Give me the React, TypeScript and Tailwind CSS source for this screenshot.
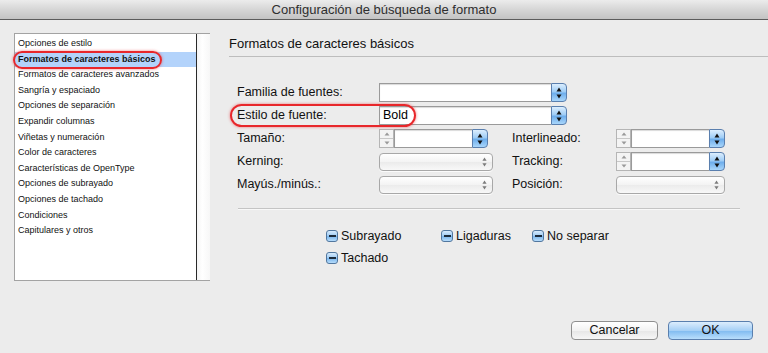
import React from 'react';

const listItems = [
  'Opciones de estilo',
  'Formatos de caracteres básicos',
  'Formatos de caracteres avanzados',
  'Sangría y espaciado',
  'Opciones de separación',
  'Expandir columnas',
  'Viñetas y numeración',
  'Color de caracteres',
  'Características de OpenType',
  'Opciones de subrayado',
  'Opciones de tachado',
  'Condiciones',
  'Capitulares y otros',
];

// tiny up/down arrows used by steppers and popups
const Arrows: React.FC<{ color?: string; size?: number }> = ({ color = '#111', size = 5 }) => (
  <svg width={size + 1} height={size * 2 + 2} viewBox="0 0 6 12">
    <path d="M3 0.5 L5.5 4.5 L0.5 4.5 Z" fill={color} />
    <path d="M3 11.5 L5.5 7.5 L0.5 7.5 Z" fill={color} />
  </svg>
);

const BlueArrowButton: React.FC = () => (
  <div className="w-[16px] h-full flex items-center justify-center rounded-r-[4px] border border-[#5a7fae] bg-[linear-gradient(to_bottom,#dceefe,#9fcdf6_45%,#6eaeec_55%,#a9d6fb)]">
    <Arrows />
  </div>
);

const ComboInput: React.FC<{ width: string; value?: string }> = ({ width, value }) => (
  <div className={`${width} h-[19px] flex`}>
    <div className="flex-1 h-full bg-white border border-[#9a9a9a] border-r-0 shadow-[inset_0_1px_1px_rgba(0,0,0,0.15)] text-[12.5px] text-black pl-[3px] leading-[17px]">
      {value}
    </div>
    <BlueArrowButton />
  </div>
);

const SmallStepper: React.FC = () => (
  <div className="w-[15px] h-[19px] flex flex-col border border-[#b5b5b5] bg-[#f4f4f4]">
    <div className="flex-1 flex items-center justify-center border-b border-[#c8c8c8]">
      <svg width="6" height="4" viewBox="0 0 6 4"><path d="M3 0.5 L5.5 3.5 L0.5 3.5 Z" fill="#9a9a9a" /></svg>
    </div>
    <div className="flex-1 flex items-center justify-center">
      <svg width="6" height="4" viewBox="0 0 6 4"><path d="M3 3.5 L5.5 0.5 L0.5 0.5 Z" fill="#9a9a9a" /></svg>
    </div>
  </div>
);

const StepperInput: React.FC = () => (
  <div className="w-[109px] flex">
    <SmallStepper />
    <ComboInput width="flex-1" />
  </div>
);

const Popup: React.FC<{ width: string }> = ({ width }) => (
  <div className={`${width} h-[18px] rounded-[4px] border border-[#a8a8a8] bg-[linear-gradient(to_bottom,#ffffff,#f3f3f3_50%,#ebebeb_51%,#f8f8f8)] shadow-[0_1px_0_rgba(255,255,255,0.8)] flex items-center justify-end pr-[5px]`}>
    <Arrows color="#7a7a7a" size={4} />
  </div>
);

const Checkbox: React.FC<{ label: string }> = ({ label }) => (
  <div className="flex items-center gap-[3px] text-[12.5px] text-[#111] h-[18px]">
    <div className="w-[12px] h-[12px] rounded-[3px] border border-[#51779f] bg-[linear-gradient(to_bottom,#d7ebfd,#9ccaf3_50%,#77b4ec_51%,#b6dcfb)] flex items-center justify-center">
      <div className="w-[7px] h-[2px] bg-[#1b2a3a]" />
    </div>
    <span>{label}</span>
  </div>
);

const Label: React.FC<{ children: React.ReactNode; width?: string }> = ({ children, width = 'w-[142px]' }) => (
  <div className={`${width} shrink-0 text-[12.5px] text-[#111]`}>{children}</div>
);

export default function App() {
  return (
    <div className="w-[768px] h-[353px] bg-[#ececec] flex flex-col overflow-hidden" style={{ fontFamily: '"Liberation Sans", Arial, sans-serif' }}>
      {/* Title bar */}
      <div className="h-[20px] shrink-0 flex items-center justify-center border-b border-[#5c5c5c] bg-[linear-gradient(to_bottom,#ececec,#d6d6d6_50%,#c3c3c3)] text-[13px] text-[#2e2e2e]">
        Configuración de búsqueda de formato
      </div>

      <div className="flex flex-1">
        {/* Category list */}
        <div className="pl-[14px] pt-[13px]">
          <div className="w-[196px] h-[248px] flex border border-[#a3a3a3] border-r-0 bg-white">
            <div className="flex-1 pt-[2px] border-r border-[#2a2a2a]">
              {listItems.map((item, i) => (
                <div
                  key={item}
                  className={`relative h-[15.6px] leading-[15.6px] pl-[3px] text-[9px] text-[#111] ${i === 1 ? 'bg-[#b3d3fb] font-bold' : ''}`}
                >
                  {item}
                  {i === 1 && (
                    <div className="absolute left-[-2px] top-[-1px] w-[149px] h-[18px] rounded-full border-2 border-[#e8272b] shadow-[0_0_3px_rgba(232,39,43,0.6)]" />
                  )}
                </div>
              ))}
            </div>
            <div className="w-[13px] bg-[linear-gradient(to_right,#f4f4f4,#ffffff_40%,#f7f7f7)]" />
          </div>
        </div>

        {/* Settings panel */}
        <div className="flex-1 flex flex-col pl-[19px]">
          <div className="mt-[16px] h-[21px] border-b border-[#bdbdbd] text-[13px] text-[#111] leading-[16px]">
            Formatos de caracteres básicos
          </div>

          <div className="pl-[8px] mt-[24px] flex flex-col">
            <div className="h-[23px] flex items-center">
              <Label>Familia de fuentes:</Label>
              <ComboInput width="w-[188px]" />
            </div>
            <div className="relative h-[23px] flex items-center">
              <Label>Estilo de fuente:</Label>
              <ComboInput width="w-[188px]" value="Bold" />
              <div className="absolute left-[-7px] top-[0px] w-[186px] h-[23px] rounded-full border-2 border-[#e8272b] shadow-[0_0_3px_rgba(232,39,43,0.6)]" />
            </div>
            <div className="h-[23px] flex items-center">
              <Label>Tamaño:</Label>
              <StepperInput />
              <Label width="w-[104px] ml-[24px]">Interlineado:</Label>
              <StepperInput />
            </div>
            <div className="h-[23px] flex items-center">
              <Label>Kerning:</Label>
              <Popup width="w-[114px]" />
              <Label width="w-[104px] ml-[19px]">Tracking:</Label>
              <StepperInput />
            </div>
            <div className="h-[23px] flex items-center">
              <Label>Mayús./minús.:</Label>
              <Popup width="w-[114px]" />
              <Label width="w-[104px] ml-[19px]">Posición:</Label>
              <Popup width="w-[109px]" />
            </div>
          </div>

          <div className="ml-[9px] mt-[12px] w-[502px] border-t border-[#c4c4c4] border-b border-b-[#f8f8f8]" />

          <div className="ml-[97px] mt-[17px] flex flex-col gap-[4px]">
            <div className="flex">
              <div className="w-[115px]"><Checkbox label="Subrayado" /></div>
              <div className="w-[91px]"><Checkbox label="Ligaduras" /></div>
              <Checkbox label="No separar" />
            </div>
            <Checkbox label="Tachado" />
          </div>

          <div className="mt-auto mb-[13px] mr-[15px] flex justify-end gap-[10px]">
            <button className="w-[87px] h-[19px] rounded-[4px] border border-[#8f8f8f] bg-[linear-gradient(to_bottom,#ffffff,#f2f2f2_50%,#e6e6e6_51%,#f6f6f6)] text-[12.5px] text-[#111] leading-[17px]">
              Cancelar
            </button>
            <button className="w-[85px] h-[19px] rounded-[4px] border border-[#5a7fae] bg-[linear-gradient(to_bottom,#dcedfd,#a6d0f6_50%,#7fbaf0_51%,#b9defc)] text-[12.5px] text-[#111] leading-[17px]">
              OK
            </button>
          </div>
        </div>
      </div>
    </div>
  );
}
